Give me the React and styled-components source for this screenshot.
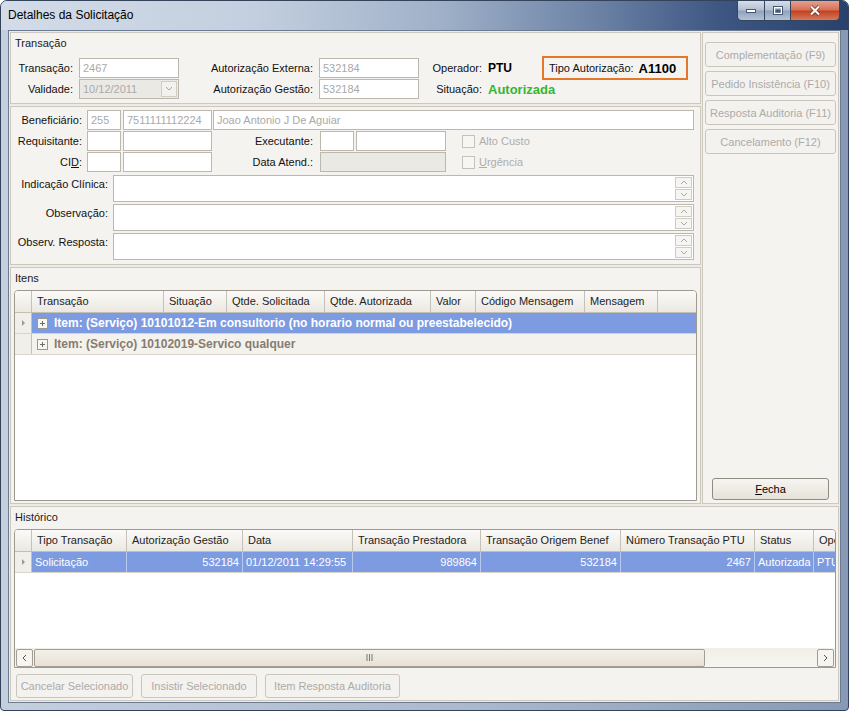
import React from "react"
import styled, { createGlobalStyle } from "styled-components"

const font = `"Liberation Sans", Arial, sans-serif`

const Global = createGlobalStyle`
  * { box-sizing: border-box; }
  body { margin: 0; background: #fff; font-family: ${font}; font-size: 11px; color: #111; }
`

const Window = styled.div`
  width: 849px;
  height: 711px;
  display: flex;
  flex-direction: column;
  border: 1px solid #34435a;
  border-radius: 7px 7px 4px 4px;
  background: linear-gradient(to right, #c4cfde 0%, #abb9cd 55%, #8799b5 100%);
  overflow: hidden;
`
const TitleBar = styled.div`
  height: 29px;
  display: flex;
  align-items: flex-start;
  background: linear-gradient(to right, #d3dce8 0%, #c3cfdf 30%, #9fb0c8 52%, #6d83a6 70%, #3d5682 85%, #29426b 100%);
`
const Title = styled.div`
  padding: 7px 0 0 7px;
  font-size: 12px;
  color: #000;
`
const Controls = styled.div`
  margin: 0 8px 0 auto;
  display: flex;
  height: 20px;
  border: 1px solid #364660;
  border-top: none;
  border-radius: 0 0 5px 5px;
  overflow: hidden;
`
const CtrlButton = styled.div`
  width: ${p => p.$w}px;
  display: flex;
  align-items: center;
  justify-content: center;
  border-left: ${p => (p.$first ? "none" : "1px solid #364660")};
  background: ${p =>
    p.$close
      ? "linear-gradient(#e7a08d, #d66f58 48%, #c2401f 52%, #d47a5e)"
      : "linear-gradient(#d6dee9, #b1bfd2 48%, #8fa2bd 52%, #b3c2d6)"};
`
const Client = styled.div`
  flex: 1;
  margin: 0 7px 7px;
  border: 1px solid #6b7a91;
  background: #eeebe5;
  padding: 1px;
  display: flex;
  flex-direction: column;
  gap: 2px;
`
const TopArea = styled.div`
  display: flex;
  gap: 1px;
  height: 472px;
`
const LeftCol = styled.div`
  width: 691px;
  display: flex;
  flex-direction: column;
  gap: 2px;
`
const Group = styled.section`
  height: ${p => p.$h}px;
  border: 1px solid #cdc8bd;
  background: #f5f3ef;
  display: flex;
  flex-direction: column;
`
const Caption = styled.div`
  height: 20px;
  line-height: 20px;
  padding-left: 4px;
  color: #1a1a1a;
`
const TransGrid = styled.div`
  display: grid;
  grid-template-columns: 68px 100px 140px 100px 69px 54px 146px;
  grid-auto-rows: 20px;
  row-gap: 1px;
  padding-top: 5px;
  align-items: center;
`
const Label = styled.div`
  text-align: right;
  padding-right: ${p => p.$pr ?? 6}px;
  white-space: nowrap;
  width: ${p => (p.$w ? `${p.$w}px` : "auto")};
  flex-shrink: 0;
  align-self: ${p => (p.$top ? "flex-start" : "center")};
  padding-top: ${p => (p.$top ? 3 : 0)}px;
`
const TextBox = styled.div`
  width: ${p => p.$w}px;
  height: 20px;
  flex-shrink: 0;
  margin-left: ${p => p.$ml || 0}px;
  border: 1px solid #bdb8ad;
  background: ${p => (p.$off ? "#ebe9e4" : "#fff")};
  color: #a9a9a9;
  padding: 0 3px;
  line-height: 18px;
  white-space: nowrap;
  overflow: hidden;
  display: flex;
  align-items: center;
  justify-content: space-between;
`
const DropArrow = styled.div`
  width: 16px;
  height: 16px;
  margin-right: -2px;
  border: 1px solid #d2cec6;
  background: #f2f1ee;
  display: flex;
  align-items: center;
  justify-content: center;
`
const Value = styled.div`
  font-weight: bold;
  font-size: ${p => p.$size || 12}px;
  color: ${p => p.$color || "#000"};
  white-space: nowrap;
`
const TipoBox = styled.div`
  grid-column: 7;
  grid-row: 1;
  height: 24px;
  margin: -2px 0;
  border: 2px solid #e5772b;
  display: flex;
  align-items: center;
  padding: 0 5px;
  gap: 5px;
  white-space: nowrap;
`
const GroupBody = styled.div`
  padding-top: 3px;
  display: flex;
  flex-direction: column;
`
const Row = styled.div`
  display: flex;
  align-items: center;
  height: 20px;
  margin-bottom: 1px;
`
const MemoRow = styled.div`
  display: flex;
  height: 27px;
  margin-top: ${p => p.$mt}px;
`
const Memo = styled.div`
  width: 581px;
  height: 27px;
  border: 1px solid #bdb8ad;
  background: #fff;
  display: flex;
  justify-content: flex-end;
  padding: 1px;
`
const Spin = styled.div`
  display: flex;
  flex-direction: column;
  gap: 1px;
`
const SpinBtn = styled.div`
  width: 17px;
  height: 11px;
  border: 1px solid #d0cbc2;
  background: #f6f5f2;
  display: flex;
  align-items: center;
  justify-content: center;
`
const Check = styled.div`
  display: flex;
  align-items: center;
  gap: 4px;
  margin-left: ${p => p.$ml}px;
  color: #adadad;
`
const CheckBox = styled.div`
  width: 13px;
  height: 13px;
  border: 1px solid #c6c2b9;
  background: #f7f6f3;
`
const SidePanel = styled.aside`
  flex: 1;
  border: 1px solid #cdc8bd;
  background: #f5f3ef;
  display: flex;
  flex-direction: column;
  gap: 4px;
  padding: 9px 2px 3px;
`
const Button = styled.div`
  width: ${p => p.$w}px;
  height: ${p => p.$h || 24}px;
  flex-shrink: 0;
  border: 1px solid ${p => (p.$on ? "#8f8a80" : "#cbc6bc")};
  border-radius: 3px;
  background: ${p => (p.$on ? "linear-gradient(#f7f5f1, #e6e2d9)" : "#f4f2ee")};
  color: ${p => (p.$on ? "#000" : "#ababab")};
  display: flex;
  align-items: center;
  justify-content: center;
  white-space: nowrap;
`
const FechaButton = styled(Button)`
  margin-top: auto;
  align-self: center;
`
const Table = styled.div`
  flex: 1;
  margin: ${p => p.$m};
  border: 1px solid #9d998f;
  border-radius: 4px 4px 0 0;
  background: #fff;
  overflow: hidden;
  display: flex;
  flex-direction: column;
`
const HeadRow = styled.div`
  display: flex;
  height: 22px;
  flex-shrink: 0;
  background: linear-gradient(#fbfaf8, #ebe8e1);
  border-bottom: 1px solid #c3beb3;
`
const HeadCell = styled.div`
  width: ${p => p.$w}px;
  flex-shrink: 0;
  border-right: 1px solid #c6c1b6;
  padding-left: ${p => (p.$w < 20 ? 0 : 5)}px;
  line-height: 21px;
  white-space: nowrap;
  overflow: hidden;
  color: #222;
`
const BodyRow = styled.div`
  display: flex;
  height: 21px;
  flex-shrink: 0;
  border-bottom: 1px solid #d9d5cc;
`
const Indicator = styled.div`
  width: 17px;
  flex-shrink: 0;
  border-right: 1px solid #c6c1b6;
  background: #f1efe9;
  display: flex;
  align-items: center;
  justify-content: center;
`
const GroupCell = styled.div`
  flex: 1;
  display: flex;
  align-items: center;
  gap: 6px;
  padding-left: 5px;
  font-weight: bold;
  font-size: 12px;
  background: ${p => (p.$sel ? "#7d9be0" : "#f4f2ed")};
  color: ${p => (p.$sel ? "#fff" : "#877c70")};
  white-space: nowrap;
`
const ExpandBox = styled.div`
  width: 11px;
  height: 11px;
  border: 1px solid #9b9890;
  background: #f7f6f3;
  display: flex;
  align-items: center;
  justify-content: center;
`
const DataCell = styled.div`
  width: ${p => p.$w}px;
  flex-shrink: 0;
  padding: 0 3px;
  line-height: 20px;
  text-align: ${p => p.$align || "left"};
  background: #7d9be0;
  color: #fff;
  border-right: 1px solid #b9c8ee;
  white-space: nowrap;
  overflow: hidden;
`
const ScrollBar = styled.div`
  margin-top: auto;
  height: 19px;
  display: flex;
  align-items: center;
  padding: 0 1px;
  background: linear-gradient(#f1eee7, #f8f6f2);
`
const ScrollBtn = styled.div`
  width: 17px;
  height: 18px;
  flex-shrink: 0;
  border: 1px solid #a39d92;
  border-radius: 2px;
  background: #f6f4ef;
  display: flex;
  align-items: center;
  justify-content: center;
  margin-left: ${p => (p.$right ? "auto" : 0)};
`
const Thumb = styled.div`
  width: 671px;
  height: 18px;
  margin-left: 1px;
  border: 1px solid #a39d92;
  border-radius: 2px;
  background: linear-gradient(#f4f0e8, #e7e1d5);
  display: flex;
  align-items: center;
  justify-content: center;
`
const BottomBar = styled.div`
  display: flex;
  gap: 8px;
  padding: 6px 0 2px 5px;
`

const Chevron = ({ dir = "down", color = "#9a9a9a" }) => {
  const pts = {
    down: "1,2 4,5 7,2",
    up: "1,5 4,2 7,5",
    left: "5,1 2,4 5,7",
    right: "2,1 5,4 2,7",
  }[dir]
  return (
    <svg width="8" height="8" viewBox="0 0 8 8">
      <polyline points={pts} fill="none" stroke={color} strokeWidth="1" />
    </svg>
  )
}

const RowArrow = () => (
  <svg width="5" height="8" viewBox="0 0 5 8">
    <polygon points="1,1 4,4 1,7" fill="#9c9a94" />
  </svg>
)

const Plus = () => (
  <svg width="7" height="7" viewBox="0 0 7 7">
    <path d="M1 3.5h5M3.5 1v5" stroke="#6d6a64" strokeWidth="1" />
  </svg>
)

const MemoField = ({ label, mt }) => (
  <MemoRow $mt={mt}>
    <Label $w={102} $pr={5} $top>{label}</Label>
    <Memo>
      <Spin>
        <SpinBtn><Chevron dir="up" color="#a8a8a8" /></SpinBtn>
        <SpinBtn><Chevron dir="down" color="#a8a8a8" /></SpinBtn>
      </Spin>
    </Memo>
  </MemoRow>
)

const itensCols = [
  ["", 17], ["Transação", 132], ["Situação", 63], ["Qtde. Solicitada", 98],
  ["Qtde. Autorizada", 106], ["Valor", 45], ["Código Mensagem", 109], ["Mensagem", 73], ["", 60],
]

const histCols = [
  ["", 17], ["Tipo Transação", 95], ["Autorização Gestão", 116], ["Data", 110],
  ["Transação Prestadora", 128], ["Transação Origem Benef", 140],
  ["Número Transação PTU", 134], ["Status", 59], ["Operador", 80],
]

const histRow = [
  ["Solicitação", "left"], ["532184", "right"], ["01/12/2011 14:29:55", "left"],
  ["989864", "right"], ["532184", "right"], ["2467", "right"], ["Autorizada", "left"], ["PTU", "left"],
]

const App = () => {
  return (
    <>
      <Global />
      <Window>
        <TitleBar>
          <Title>Detalhes da Solicitação</Title>
          <Controls>
            <CtrlButton $w={26} $first>
              <svg width="10" height="4"><rect x="0.5" y="0.5" width="9" height="3" fill="#fff" stroke="#4a5770" /></svg>
            </CtrlButton>
            <CtrlButton $w={26}>
              <svg width="10" height="9"><rect x="0.5" y="0.5" width="9" height="8" fill="none" stroke="#4a5770" /><rect x="1.5" y="1.5" width="7" height="6" fill="none" stroke="#fff" /><rect x="2.5" y="3.5" width="5" height="3" fill="#4a5770" /></svg>
            </CtrlButton>
            <CtrlButton $w={49} $close>
              <svg width="12" height="11" viewBox="0 0 12 11"><path d="M2 1.5l8 8M10 1.5l-8 8" stroke="#5a1d12" strokeWidth="3.4" /><path d="M2 1.5l8 8M10 1.5l-8 8" stroke="#fff" strokeWidth="2.2" /></svg>
            </CtrlButton>
          </Controls>
        </TitleBar>

        <Client>
          <TopArea>
            <LeftCol>
              <Group $h={72}>
                <Caption>Transação</Caption>
                <TransGrid>
                  <Label>Transação:</Label>
                  <TextBox $w={100}>2467</TextBox>
                  <Label>Autorização Externa:</Label>
                  <TextBox $w={100}>532184</TextBox>
                  <Label>Operador:</Label>
                  <Value>PTU</Value>
                  <TipoBox>
                    Tipo Autorização: <Value $size={13}>A1100</Value>
                  </TipoBox>

                  <Label>Validade:</Label>
                  <TextBox $w={100} $off>
                    10/12/2011
                    <DropArrow><Chevron dir="down" color="#a7a7a7" /></DropArrow>
                  </TextBox>
                  <Label>Autorização Gestão:</Label>
                  <TextBox $w={100}>532184</TextBox>
                  <Label>Situação:</Label>
                  <Value $size={13} $color="#35b534">Autorizada</Value>
                </TransGrid>
              </Group>

              <Group $h={159}>
                <GroupBody>
                  <Row>
                    <Label $w={76} $pr={5}>Beneficiário:</Label>
                    <TextBox $w={34}>255</TextBox>
                    <TextBox $w={89} $ml={2}>7511111112224</TextBox>
                    <TextBox $w={481} $ml={1}>Joao Antonio J De Aguiar</TextBox>
                  </Row>
                  <Row>
                    <Label $w={76} $pr={5}>Requisitante:</Label>
                    <TextBox $w={34} />
                    <TextBox $w={89} $ml={2} />
                    <Label $w={108} $pr={7}>Executante:</Label>
                    <TextBox $w={34} />
                    <TextBox $w={90} $ml={2} />
                    <Check $ml={16}><CheckBox />Alto Custo</Check>
                  </Row>
                  <Row>
                    <Label $w={76} $pr={5}>CI<u>D</u>:</Label>
                    <TextBox $w={34} />
                    <TextBox $w={89} $ml={2} />
                    <Label $w={108} $pr={7}>Data Atend.:</Label>
                    <TextBox $w={126} $off />
                    <Check $ml={16}><CheckBox /><span><u>U</u>rgência</span></Check>
                  </Row>
                  <MemoField label="Indicação Clínica:" mt={2} />
                  <MemoField label="Observação:" mt={2} />
                  <MemoField label="Observ. Resposta:" mt={2} />
                </GroupBody>
              </Group>

              <Group $h={237}>
                <Caption>Itens</Caption>
                <Table $m="2px 3px 2px 3px">
                  <HeadRow>
                    {itensCols.map(([t, w], i) => (
                      <HeadCell key={i} $w={w}>{t}</HeadCell>
                    ))}
                  </HeadRow>
                  <BodyRow>
                    <Indicator><RowArrow /></Indicator>
                    <GroupCell $sel>
                      <ExpandBox><Plus /></ExpandBox>
                      Item: (Serviço) 10101012-Em consultorio (no horario normal ou preestabelecido)
                    </GroupCell>
                  </BodyRow>
                  <BodyRow>
                    <Indicator />
                    <GroupCell>
                      <ExpandBox><Plus /></ExpandBox>
                      Item: (Serviço) 10102019-Servico qualquer
                    </GroupCell>
                  </BodyRow>
                </Table>
              </Group>
            </LeftCol>

            <SidePanel>
              <Button $w={131} $h={25}>Complementação (F9)</Button>
              <Button $w={131} $h={25}>Pedido Insistência (F10)</Button>
              <Button $w={131} $h={25}>Resposta Auditoria (F11)</Button>
              <Button $w={131} $h={25}>Cancelamento (F12)</Button>
              <FechaButton $w={117} $h={22} $on><span><u>F</u>echa</span></FechaButton>
            </SidePanel>
          </TopArea>

          <Group $h={195}>
            <Caption>Histórico</Caption>
            <Table $m="2px 2px 0 3px">
              <HeadRow>
                {histCols.map(([t, w], i) => (
                  <HeadCell key={i} $w={w}>{t}</HeadCell>
                ))}
              </HeadRow>
              <BodyRow>
                <Indicator><RowArrow /></Indicator>
                {histRow.map(([t, a], i) => (
                  <DataCell key={i} $w={histCols[i + 1][1]} $align={a}>{t}</DataCell>
                ))}
              </BodyRow>
              <ScrollBar>
                <ScrollBtn><Chevron dir="left" color="#555" /></ScrollBtn>
                <Thumb>
                  <svg width="7" height="7"><path d="M1 0v7M3.5 0v7M6 0v7" stroke="#777" /></svg>
                </Thumb>
                <ScrollBtn $right><Chevron dir="right" color="#555" /></ScrollBtn>
              </ScrollBar>
            </Table>
            <BottomBar>
              <Button $w={117}>Cancelar Selecionado</Button>
              <Button $w={116}>Insistir Selecionado</Button>
              <Button $w={135}>Item Resposta Auditoria</Button>
            </BottomBar>
          </Group>
        </Client>
      </Window>
    </>
  )
}

export default App
